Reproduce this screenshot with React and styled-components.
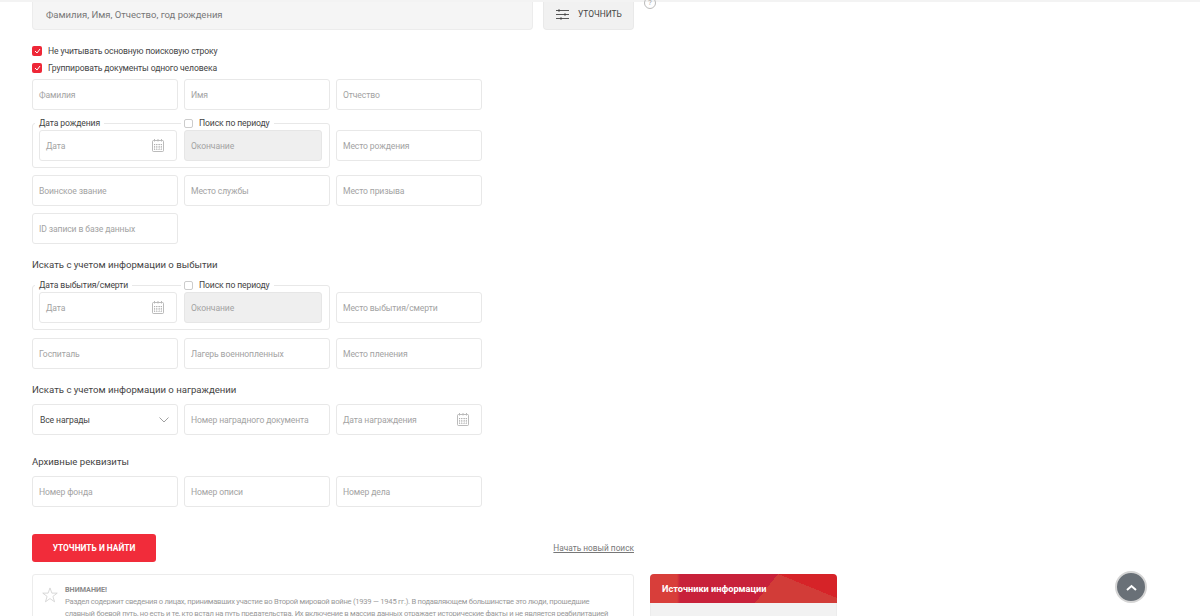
import React from 'react';
import styled, { createGlobalStyle } from 'styled-components';

const GlobalStyle = createGlobalStyle`
html, body {
  margin: 0;
  height: 616px;
  overflow: hidden;
  background: #fff;
  font-family: Roboto, "Noto Sans", sans-serif;
}
* {
  box-sizing: border-box;
}
`;

const TopStrip = styled.div`
height: 2px;
background: #f3f3f3;
`;

const Page = styled.div`
display: flex;
gap: 16px;
padding-left: 32px;
`;

const MainColumn = styled.div`
width: 602px;
`;

const SearchRow = styled.div`
position: relative;
display: flex;
gap: 10px;
height: 28px;
`;

const SearchInput = styled.div`
flex: 1;
display: flex;
align-items: center;
padding: 0 13px 2px;
background: #f5f5f5;
border: 1px solid #ececec;
border-top: 0;
border-radius: 0 0 4px 4px;
font-size: 9.5px;
color: #777;
`;

const RefineBtn = styled.div`
width: 91px;
display: flex;
align-items: center;
gap: 9px;
padding: 0 0 3px 12px;
background: #f1f1f1;
border: 1px solid #e9e9e9;
border-top: 0;
border-radius: 0 0 4px 4px;
font-size: 8.4px;
color: #444;
`;

const HelpIcon = styled.div`
position: absolute;
left: 612px;
top: -5px;
width: 12px;
height: 12px;
border: 1px solid #bbb;
border-radius: 50%;
font-size: 8px;
line-height: 10px;
text-align: center;
color: #aaa;
`;

const Checks = styled.div`
display: flex;
flex-direction: column;
gap: 7px;
margin-top: 16px;
margin-bottom: 6px;
`;

const CheckLabel = styled.div`
display: flex;
align-items: center;
gap: 6px;
height: 10px;
font-size: 8.6px;
letter-spacing: -0.12px;
color: #444;
`;

const CheckBox = styled.span`
width: ${(p) => (p.$checked ? 10 : 9)}px;
height: ${(p) => (p.$checked ? 10 : 9)}px;
flex: none;
display: flex;
align-items: center;
justify-content: center;
border-radius: 2px;
background: ${(p) => (p.$checked ? '#ee2737' : '#fff')};
border: ${(p) => (p.$checked ? '0' : '1px solid #ccc')};
`;

const FormGrid = styled.div`
display: grid;
grid-template-columns: repeat(3, 146px);
gap: ${(p) => p.$rowGap || 7}px 6px;
width: 450px;
margin-bottom: ${(p) => p.$mb || 0}px;
`;

const Field = styled.div`
height: 31px;
display: flex;
align-items: center;
justify-content: space-between;
padding: 0 ${(p) => (p.$iconed ? '12px' : '6px')} 0 6px;
border: 1px solid ${(p) => (p.$disabled ? '#e6e6e6' : '#e8e8e8')};
border-radius: 3px;
background: ${(p) => (p.$disabled ? '#efefef' : '#fff')};
font-size: 8.6px;
letter-spacing: -0.12px;
color: ${(p) => (p.$dark ? '#444' : '#a3a3a3')};
`;

const SelectField = styled(Field)`
padding: 0 8px 0 7px;
`;

const DateGroup = styled.div`
position: relative;
grid-column: span 2;
height: 45px;
margin-top: 6px;
display: grid;
grid-template-columns: 138px 138px;
gap: 7px;
padding: 6px 7px 6px 6px;
border: 1px solid #e8e8e8;
border-radius: 3px;
`;

const PlaceField = styled(Field)`
margin-top: 13px;
`;

const GroupLegend = styled.div`
position: absolute;
top: -7px;
left: 2px;
padding: 0 4px;
background: #fff;
font-size: 8.6px;
letter-spacing: -0.12px;
line-height: 12px;
color: #444;
`;

const PeriodLegend = styled.div`
position: absolute;
top: -7px;
left: 148px;
display: flex;
align-items: center;
gap: 6px;
padding: 0 4px 0 3px;
background: #fff;
font-size: 8.6px;
letter-spacing: -0.12px;
line-height: 12px;
color: #444;
`;

const SectionTitle = styled.div`
font-size: 9.6px;
line-height: 14px;
color: #444;
margin-bottom: ${(p) => p.$mb || 7}px;
`;

const ActionRow = styled.div`
display: flex;
align-items: center;
justify-content: space-between;
margin-top: 27px;
`;

const SubmitBtn = styled.div`
width: 124px;
height: 28px;
display: flex;
align-items: center;
justify-content: center;
border-radius: 3px;
background: #f12c3a;
color: #fff;
font-size: 8.4px;
font-weight: 700;
`;

const ResetLink = styled.a`
font-size: 8.3px;
color: #777;
text-decoration: underline;
`;

const Notice = styled.div`
display: flex;
gap: 7px;
margin-top: 12px;
padding: 9px 22px 12px 9px;
border: 1px solid #ececec;
border-radius: 3px;
height: 80px;
`;

const NoticeBody = styled.div`
font-size: 7.6px;
letter-spacing: -0.25px;
line-height: 12px;
color: #999;
`;

const NoticeTitle = styled.div`
font-size: 7.2px;
font-weight: 700;
letter-spacing: 0;
color: #8a8a8a;
`;

const Star = styled.svg`
flex: none;
margin-top: 3px;
`;

const SidePanel = styled.div`
width: 187px;
margin-top: 572px;
height: 80px;
background: #f2f2f2;
border: 1px solid #ececec;
border-radius: 4px 4px 0 0;
`;

const SideHeader = styled.div`
height: 29px;
margin: -1px -1px 0;
display: flex;
align-items: center;
padding-left: 12px;
border-radius: 4px 4px 0 0;
background:
  linear-gradient(to top right, transparent 50%, #d62328 50%) no-repeat right top / 59px 24px,
  linear-gradient(#d23c38, #d23c38) no-repeat 128px 0 / 59px 100%,
  linear-gradient(to bottom right, transparent 50%, #d23c38 50%) no-repeat 105px 0 / 23px 100%,
  linear-gradient(90deg, #d83e3a 27px, #c8213a 30px);
color: #fff;
font-size: 9.2px;
font-weight: 700;
`;

const ScrollTop = styled.div`
position: fixed;
left: 1115px;
top: 571px;
width: 32px;
height: 32px;
display: flex;
align-items: center;
justify-content: center;
border-radius: 50%;
background: #697077;
border: 2px solid #d5d5d5;
`;

const CalendarIcon = () => (
  <svg width="12" height="13" viewBox="0 0 12 13" fill="none" stroke="#aaa" strokeWidth="0.8">
    <rect x="0.5" y="1.5" width="11" height="11" rx="1" />
    <path d="M2.5 0v2.5M6 0v2.5M9.5 0v2.5M2.5 5v5.5M4.7 5v5.5M7.3 5v5.5M9.5 5v5.5M2 5.5h8M2 8h8M2 10.5h8" strokeDasharray="1 0.8" />
  </svg>
);

const Chevron = () => (
  <svg width="10" height="6" viewBox="0 0 10 6" fill="none" stroke="#888" strokeWidth="0.8">
    <path d="M0.5 0.5L5 5L9.5 0.5" />
  </svg>
);

const Tick = () => (
  <svg width="7" height="6" viewBox="0 0 7 6" fill="none" stroke="#fff" strokeWidth="1">
    <path d="M1 3l2 2 3-4" />
  </svg>
);

const SlidersIcon = () => (
  <svg width="13" height="11" viewBox="0 0 13 11" fill="none" stroke="#444" strokeWidth="0.9">
    <path d="M0 1.5h13M0 5.5h13M0 9.5h13" />
    <path d="M3 0.5v2M9 4.5v2M5 8.5v2" strokeWidth="1.6" />
  </svg>
);

const StarIcon = () => (
  <Star width="16" height="16" viewBox="0 0 17 17" fill="none" stroke="#ccc" strokeWidth="0.8">
    <path d="M8.5 1l2 5.5h5.7l-4.6 3.5 1.7 5.7-4.8-3.4-4.8 3.4 1.7-5.7L0.8 6.5h5.7z" />
  </Star>
);

const UpIcon = () => (
  <svg width="11" height="7" viewBox="0 0 11 7" fill="none" stroke="#fff" strokeWidth="2">
    <path d="M1 6l4.5-4L10 6" />
  </svg>
);

const DateSet = ({ legend, placeholder }) => (
  <>
    <DateGroup>
      <GroupLegend>{legend}</GroupLegend>
      <PeriodLegend><CheckBox />Поиск по периоду</PeriodLegend>
      <Field $iconed>Дата<CalendarIcon /></Field>
      <Field $disabled>Окончание</Field>
    </DateGroup>
    <PlaceField>{placeholder}</PlaceField>
  </>
);

const App = () => {
  return (
    <>
      <GlobalStyle />
      <TopStrip />
      <Page>
        <MainColumn>
          <SearchRow>
            <SearchInput>Фамилия, Имя, Отчество, год рождения</SearchInput>
            <RefineBtn><SlidersIcon />УТОЧНИТЬ</RefineBtn>
            <HelpIcon>?</HelpIcon>
          </SearchRow>
          <Checks>
            <CheckLabel><CheckBox $checked><Tick /></CheckBox>Не учитывать основную поисковую строку</CheckLabel>
            <CheckLabel><CheckBox $checked><Tick /></CheckBox>Группировать документы одного человека</CheckLabel>
          </Checks>
          <FormGrid $mb={14}>
            <Field>Фамилия</Field>
            <Field>Имя</Field>
            <Field>Отчество</Field>
            <DateSet legend="Дата рождения" placeholder="Место рождения" />
            <Field>Воинское звание</Field>
            <Field>Место службы</Field>
            <Field>Место призыва</Field>
            <Field>ID записи в базе данных</Field>
          </FormGrid>
          <SectionTitle>Искать с учетом информации о выбытии</SectionTitle>
          <FormGrid $mb={14} $rowGap={8}>
            <DateSet legend="Дата выбытия/смерти" placeholder="Место выбытия/смерти" />
            <Field>Госпиталь</Field>
            <Field>Лагерь военнопленных</Field>
            <Field>Место пленения</Field>
          </FormGrid>
          <SectionTitle>Искать с учетом информации о награждении</SectionTitle>
          <FormGrid $mb={20}>
            <SelectField $dark>Все награды<Chevron /></SelectField>
            <Field>Номер наградного документа</Field>
            <Field $iconed>Дата награждения<CalendarIcon /></Field>
          </FormGrid>
          <SectionTitle>Архивные реквизиты</SectionTitle>
          <FormGrid>
            <Field>Номер фонда</Field>
            <Field>Номер описи</Field>
            <Field>Номер дела</Field>
          </FormGrid>
          <ActionRow>
            <SubmitBtn>УТОЧНИТЬ И НАЙТИ</SubmitBtn>
            <ResetLink>Начать новый поиск</ResetLink>
          </ActionRow>
          <Notice>
            <StarIcon />
            <NoticeBody>
              <NoticeTitle>ВНИМАНИЕ!</NoticeTitle>
              Раздел содержит сведения о лицах, принимавших участие во Второй мировой войне (1939 — 1945 гг.). В подавляющем большинстве это люди, прошедшие славный боевой путь, но есть и те, кто встал на путь предательства. Их включение в массив данных отражает исторические факты и не является реабилитацией
            </NoticeBody>
          </Notice>
        </MainColumn>
        <SidePanel>
          <SideHeader>Источники информации</SideHeader>
        </SidePanel>
      </Page>
      <ScrollTop><UpIcon /></ScrollTop>
    </>
  );
};

export default App;
